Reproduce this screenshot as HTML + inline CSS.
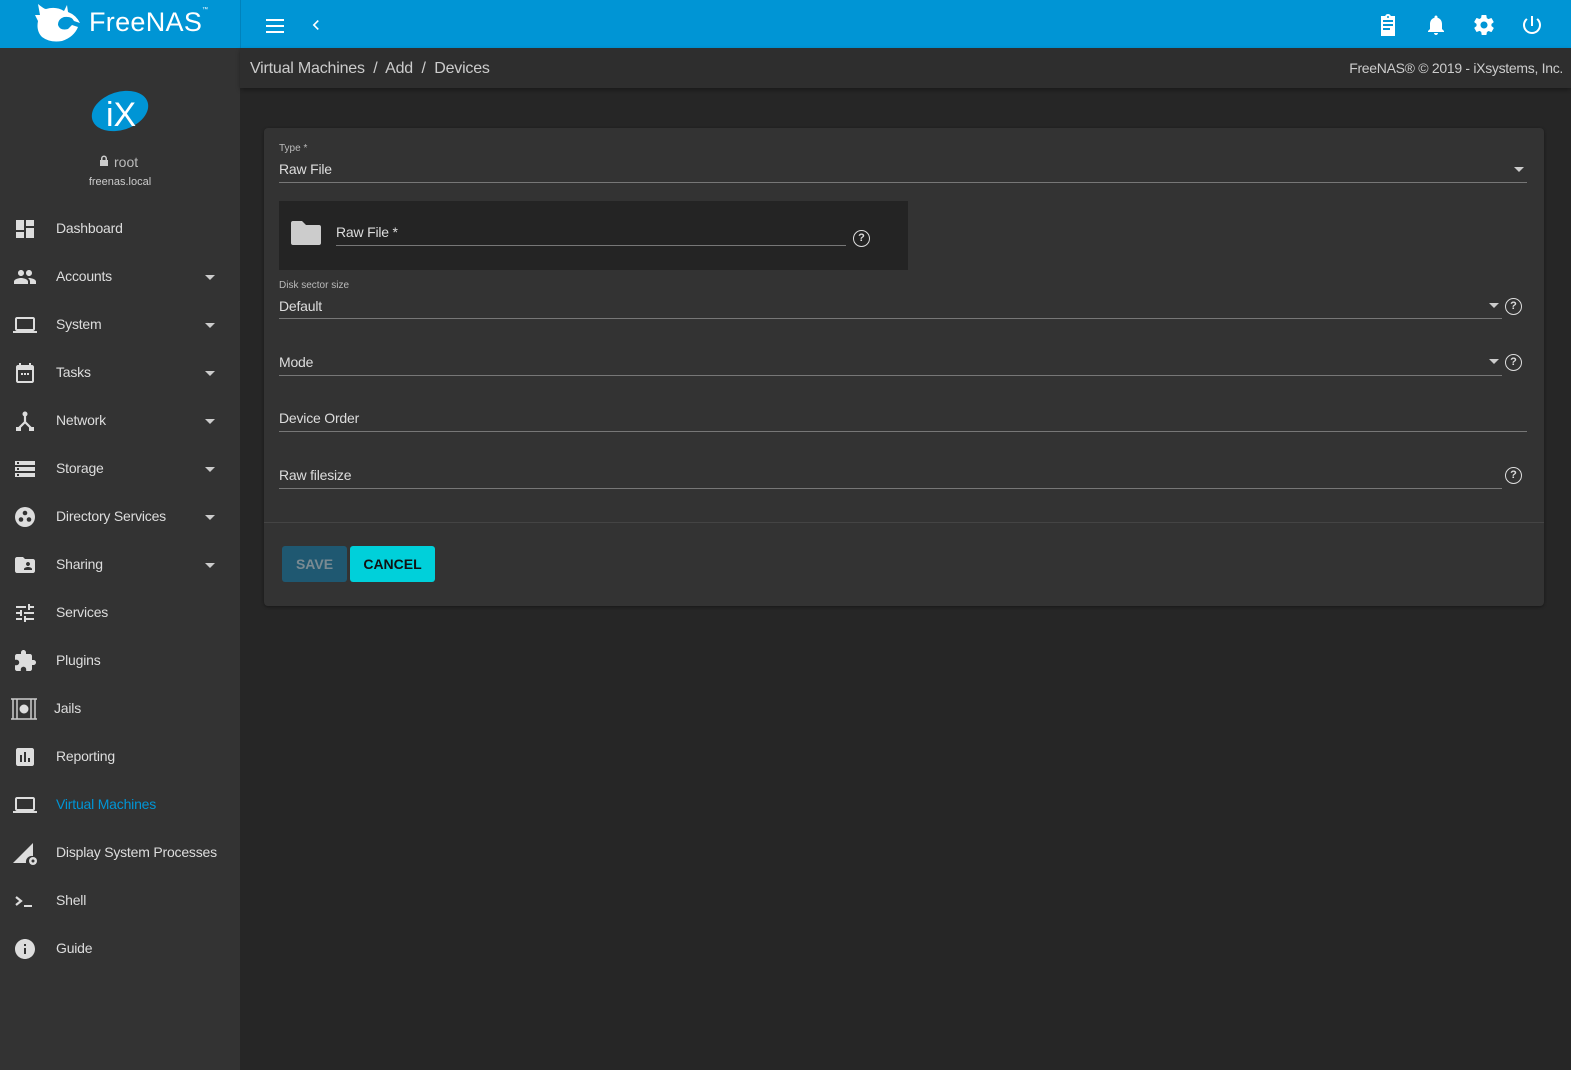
<!DOCTYPE html>
<html><head><meta charset="utf-8"><style>
*{box-sizing:border-box;margin:0;padding:0}
body{width:1571px;height:1070px;overflow:hidden;background:#262626;font-family:"Liberation Sans",sans-serif;color:#e0e0e0;position:relative}
.abs{position:absolute}
#top{left:0;top:0;width:1571px;height:48px;background:#0095d5}
#side{left:0;top:48px;width:240px;height:1022px;background:#333}
#crumb{left:240px;top:48px;width:1331px;height:40px;background:#2e2e2e;box-shadow:0 2px 4px rgba(0,0,0,.3)}
.nav{position:absolute;left:0;width:240px;height:48px;font-size:14px;color:#ddd;letter-spacing:-0.2px}
.nav span{position:absolute;left:56px;top:17px}
.nav svg{position:absolute;left:13px;top:14px}
.nav .car{position:absolute;left:205px;top:24px;border-left:5px solid transparent;border-right:5px solid transparent;border-top:5px solid #ccc}
#card{left:264px;top:128px;width:1280px;height:478px;background:#333;border-radius:4px;box-shadow:0 1px 3px rgba(0,0,0,.4)}
.lbl{position:absolute;font-size:10px;color:#bbb}
.val{position:absolute;font-size:14px;color:#ddd;letter-spacing:-0.2px}
.line{position:absolute;height:1px;background:#777}
.dd{position:absolute;border-left:5px solid transparent;border-right:5px solid transparent;border-top:5px solid #ccc}
.help{position:absolute;width:17px;height:17px;border:1.5px solid #ddd;border-radius:50%;font-size:11px;font-weight:bold;text-align:center;line-height:14px;color:#ddd}
</style></head><body>
<div id="top" class="abs">
 <svg class="abs" style="left:34px;top:3px" width="50" height="40" viewBox="0 0 50 40"><path fill="#fff" d="M4 1 Q10 6 12 6 Q22 3 30 8 L33 2 L34 9 Q42 12 46 20 L40 18 Q38 13 30 14 Q24 16 24 22 Q26 28 34 26 L38 22 L44 24 Q40 34 28 38 Q16 40 8 34 Q2 28 4 18 L1 12 L6 12 Z"/><circle cx="32" cy="20" r="3" fill="#0095d5"/></svg>
 <div class="abs" style="left:89px;top:7px;font-size:27px;color:#fff;letter-spacing:0.3px">FreeNAS<sup style="font-size:6px;vertical-align:top">™</sup></div>
 <div class="abs" style="left:240px;top:0;width:1px;height:48px;background:rgba(0,0,0,.12)"></div>
 <svg class="abs" style="left:264px;top:15px" width="22" height="20" viewBox="0 0 22 20"><path fill="#fff" d="M2 4h18v2H2zm0 6h18v2H2zm0 6h18v2H2z"/></svg>
 <svg class="abs" style="left:306px;top:15px" width="20" height="20" viewBox="0 0 24 24"><path fill="#fff" d="M15.4 7.4L14 6l-6 6 6 6 1.4-1.4L10.8 12z"/></svg>
 <svg class="abs" style="left:1376px;top:13px" width="24" height="24" viewBox="0 0 24 24"><path fill="#fff" d="M19 3h-4.2C14.4 1.8 13.3 1 12 1s-2.4.8-2.8 2H5v20h14V3zm-7 0c.6 0 1 .4 1 1s-.4 1-1 1-1-.4-1-1 .4-1 1-1zm2 14H7v-2h7v2zm3-4H7v-2h10v2zm0-4H7V7h10v2z"/></svg>
 <svg class="abs" style="left:1424px;top:13px" width="24" height="24" viewBox="0 0 24 24"><path fill="#fff" d="M12 22c1.1 0 2-.9 2-2h-4c0 1.1.9 2 2 2zm6-6v-5c0-3.1-1.6-5.6-4.5-6.3V4c0-.8-.7-1.5-1.5-1.5s-1.5.7-1.5 1.5v.7C7.6 5.4 6 7.9 6 11v5l-2 2v1h16v-1l-2-2z"/></svg>
 <svg class="abs" style="left:1472px;top:13px" width="24" height="24" viewBox="0 0 24 24"><path fill="#fff" d="M19.4 13c0-.3.1-.6.1-1s0-.7-.1-1l2.1-1.6c.2-.2.2-.4.1-.6l-2-3.5c-.1-.2-.4-.3-.6-.2l-2.5 1c-.5-.4-1.1-.7-1.7-1l-.4-2.6C14.4 2.2 14.2 2 14 2h-4c-.2 0-.5.2-.5.4l-.4 2.6c-.6.3-1.2.6-1.7 1l-2.5-1c-.2-.1-.5 0-.6.2l-2 3.5c-.1.2-.1.5.1.6L4.6 11c0 .3-.1.6-.1 1s0 .7.1 1l-2.1 1.6c-.2.2-.2.4-.1.6l2 3.5c.1.2.4.3.6.2l2.5-1c.5.4 1.1.7 1.700 1l.4 2.6c0 .3.2.5.4.5h4c.2 0 .5-.2.5-.4l.4-2.6c.6-.3 1.2-.6 1.7-1l2.5 1c.2.1.5 0 .6-.2l2-3.5c.1-.2.1-.5-.1-.6L19.4 13zM12 15.5c-1.9 0-3.5-1.6-3.5-3.5s1.6-3.5 3.5-3.5 3.5 1.6 3.5 3.5-1.6 3.5-3.5 3.5z"/></svg>
 <svg class="abs" style="left:1520px;top:13px" width="24" height="24" viewBox="0 0 24 24"><path fill="#fff" d="M13 3h-2v10h2V3zm4.8 2.2l-1.4 1.4C17.9 7.8 19 9.8 19 12c0 3.9-3.1 7-7 7s-7-3.1-7-7c0-2.2 1.1-4.2 2.6-5.4L6.2 5.2C4.2 6.9 3 9.3 3 12c0 5 4 9 9 9s9-4 9-9c0-2.7-1.2-5.1-3.2-6.8z"/></svg>
</div>
<div id="side" class="abs">
 <svg class="abs" style="left:90px;top:40px" width="60" height="46" viewBox="0 0 60 46"><ellipse cx="30" cy="23" rx="29" ry="19" transform="rotate(-18 30 23)" fill="#0095d5"/><text x="16" y="38" font-family="Liberation Sans Narrow, Liberation Sans" font-size="34" fill="#fff">iX</text></svg>
 <svg class="abs" style="left:99px;top:107px" width="10" height="12" viewBox="0 0 10 12"><path fill="#ccc" d="M2 5V3.5a3 3 0 016 0V5h1v6H1V5zm1.5 0h3V3.5a1.5 1.5 0 00-3 0z"/></svg>
 <div class="abs" style="left:114px;top:106px;font-size:14px;color:#bbb">root</div>
 <div class="abs" style="left:0;width:240px;text-align:center;top:128px;font-size:11px;color:#ccc">freenas.local</div>
</div>
<div class="nav" style="top:203px"><svg width="24" height="24" viewBox="0 0 24 24"><path fill="#ddd" d="M3 13h8V3H3v10zm0 8h8v-6H3v6zm10 0h8V11h-8v10zm0-18v6h8V3h-8z"/></svg><span>Dashboard</span></div>
<div class="nav" style="top:251px"><svg width="24" height="24" viewBox="0 0 24 24"><path fill="#ddd" d="M16 11c1.7 0 3-1.3 3-3s-1.3-3-3-3-3 1.3-3 3 1.3 3 3 3zm-8 0c1.7 0 3-1.3 3-3S9.7 5 8 5 5 6.3 5 8s1.3 3 3 3zm0 2c-2.3 0-7 1.2-7 3.5V19h14v-2.5c0-2.3-4.7-3.5-7-3.5zm8 0c-.3 0-.6 0-1 .1 1.2.8 2 2 2 3.4V19h6v-2.5c0-2.3-4.7-3.5-7-3.5z"/></svg><span>Accounts</span><i class="car"></i></div>
<div class="nav" style="top:299px"><svg width="24" height="24" viewBox="0 0 24 24"><path fill="#ddd" d="M20 18c1.1 0 2-.9 2-2V6c0-1.1-.9-2-2-2H4c-1.1 0-2 .9-2 2v10c0 1.1.9 2 2 2H0v2h24v-2h-4zM4 6h16v10H4V6z"/></svg><span>System</span><i class="car"></i></div>
<div class="nav" style="top:347px"><svg width="24" height="24" viewBox="0 0 24 24"><path fill="#ddd" d="M19 4h-1V2h-2v2H8V2H6v2H5c-1.1 0-2 .9-2 2v14c0 1.1.9 2 2 2h14c1.1 0 2-.9 2-2V6c0-1.1-.9-2-2-2zm0 16H5V9h14v11zM8 12h2v2H8zm3 0h2v2h-2zm3 0h2v2h-2z"/></svg><span>Tasks</span><i class="car"></i></div>
<div class="nav" style="top:395px"><svg width="24" height="24" viewBox="0 0 24 24"><circle cx="12" cy="5" r="2.5" fill="#ddd"/><path stroke="#ddd" stroke-width="2.2" fill="none" d="M12 7v6l-6 6M12 13l6 6"/><rect x="3" y="18" width="5" height="4" fill="#ddd"/><rect x="16" y="18" width="5" height="4" fill="#ddd"/></svg><span>Network</span><i class="car"></i></div>
<div class="nav" style="top:443px"><svg width="24" height="24" viewBox="0 0 24 24"><path fill="#ddd" d="M2 20h20v-4H2v4zm2-3h2v2H4v-2zM2 4v4h20V4H2zm4 3H4V5h2v2zm-4 7h20v-4H2v4zm2-3h2v2H4v-2z"/></svg><span>Storage</span><i class="car"></i></div>
<div class="nav" style="top:491px"><svg width="24" height="24" viewBox="0 0 24 24"><circle cx="12" cy="12" r="10" fill="#ddd"/><circle cx="12" cy="8" r="2.3" fill="#333"/><circle cx="8" cy="14.5" r="2.3" fill="#333"/><circle cx="16" cy="14.5" r="2.3" fill="#333"/></svg><span>Directory Services</span><i class="car"></i></div>
<div class="nav" style="top:539px"><svg width="24" height="24" viewBox="0 0 24 24"><path fill="#ddd" d="M20 6h-8l-2-2H4c-1.1 0-2 .9-2 2v12c0 1.1.9 2 2 2h16c1.1 0 2-.9 2-2V8c0-1.1-.9-2-2-2zm-5 3c1.1 0 2 .9 2 2s-.9 2-2 2-2-.9-2-2 .9-2 2-2zm4 8h-8v-1c0-1.3 2.7-2 4-2s4 .7 4 2v1z"/></svg><span>Sharing</span><i class="car"></i></div>
<div class="nav" style="top:587px"><svg width="24" height="24" viewBox="0 0 24 24"><path fill="#ddd" d="M3 17v2h6v-2H3zM3 5v2h10V5H3zm10 16v-2h8v-2h-8v-2h-2v6h2zM7 9v2H3v2h4v2h2V9H7zm14 4v-2H11v2h10zm-6-4h2V7h4V5h-4V3h-2v6z"/></svg><span>Services</span></div>
<div class="nav" style="top:635px"><svg width="24" height="24" viewBox="0 0 24 24"><path fill="#ddd" d="M20.5 11H19V7c0-1.1-.9-2-2-2h-4V3.5C13 2.1 11.9 1 10.5 1S8 2.1 8 3.5V5H4c-1.1 0-2 .9-2 2v3.8h1.5c1.5 0 2.7 1.2 2.7 2.7S5 16.2 3.5 16.2H2V20c0 1.1.9 2 2 2h3.8v-1.5c0-1.5 1.200-2.7 2.7-2.7s2.7 1.2 2.7 2.7V22H17c1.1 0 2-.9 2-2v-4h1.5c1.4 0 2.5-1.1 2.5-2.5S21.9 11 20.5 11z"/></svg><span>Plugins</span></div>
<div class="nav" style="top:683px"><svg style="left:10px" width="28" height="24" viewBox="0 0 28 24"><path fill="none" stroke="#ccc" stroke-width="1.5" d="M1 2h26M1 22h26M3 2v20M7 2v20M21 2v20M25 2v20"/><circle cx="14" cy="12" r="5" fill="#ddd" stroke="#333"/></svg><span style="left:54px">Jails</span></div>
<div class="nav" style="top:731px"><svg width="24" height="24" viewBox="0 0 24 24"><path fill="#ddd" d="M19 3H5c-1.1 0-2 .9-2 2v14c0 1.1.9 2 2 2h14c1.1 0 2-.9 2-2V5c0-1.1-.9-2-2-2zM9 17H7v-7h2v7zm4 0h-2V7h2v10zm4 0h-2v-4h2v4z"/></svg><span>Reporting</span></div>
<div class="nav" style="top:779px"><svg width="24" height="24" viewBox="0 0 24 24"><path fill="#ddd" d="M20 18c1.1 0 2-.9 2-2V6c0-1.1-.9-2-2-2H4c-1.1 0-2 .9-2 2v10c0 1.1.9 2 2 2H0v2h24v-2h-4zM4 6h16v10H4V6z"/></svg><span style="color:#0095d5">Virtual Machines</span></div>
<div class="nav" style="top:827px"><svg width="26" height="26" viewBox="0 0 26 26"><path fill="#ddd" d="M20 2L0 22h13a6 6 0 017-7z"/><circle cx="20" cy="20" r="4" fill="#ddd"/><circle cx="20" cy="20" r="1.5" fill="#333"/></svg><span>Display System Processes</span></div>
<div class="nav" style="top:875px"><svg width="24" height="24" viewBox="0 0 24 24"><path fill="none" stroke="#ddd" stroke-width="2.2" d="M3 8l5 4-5 4"/><path fill="#ddd" d="M11 16h8v2h-8z"/></svg><span>Shell</span></div>
<div class="nav" style="top:923px"><svg width="24" height="24" viewBox="0 0 24 24"><path fill="#ddd" d="M12 2C6.5 2 2 6.5 2 12s4.5 10 10 10 10-4.5 10-10S17.5 2 12 2zm1 15h-2v-6h2v6zm0-8h-2V7h2v2z"/></svg><span>Guide</span></div>
<div id="crumb" class="abs">
 <div class="abs" style="left:10px;top:12px;font-size:16px;color:#ccc;letter-spacing:-0.2px">Virtual Machines&nbsp; /&nbsp; Add&nbsp; /&nbsp; Devices</div>
 <div class="abs" style="right:8px;top:12px;font-size:14px;color:#ccc;letter-spacing:-0.3px">FreeNAS® © 2019 - iXsystems, Inc.</div>
</div>
<div id="card" class="abs">
 <div class="lbl" style="left:15px;top:15px">Type *</div>
 <div class="val" style="left:15px;top:33px">Raw File</div>
 <i class="dd" style="left:1250px;top:39px"></i>
 <div class="line" style="left:15px;top:54px;width:1248px"></div>
 <div class="abs" style="left:15px;top:73px;width:629px;height:69px;background:#242424">
  <svg class="abs" style="left:11px;top:18px" width="32" height="28" viewBox="0 0 32 28"><path fill="#ccc" d="M12 2H3C1.6 2 1 3 1 4v20c0 1 .6 2 2 2h26c1.4 0 2-1 2-2V8c0-1-.6-2-2-2H16z"/></svg>
  <div class="val" style="left:57px;top:23px">Raw File *</div>
  <div class="line" style="left:57px;top:44px;width:510px"></div>
  <div class="help" style="left:574px;top:29px">?</div>
 </div>
 <div class="lbl" style="left:15px;top:152px">Disk sector size</div>
 <div class="val" style="left:15px;top:170px">Default</div>
 <i class="dd" style="left:1225px;top:175px"></i>
 <div class="line" style="left:15px;top:190px;width:1223px"></div>
 <div class="help" style="left:1241px;top:170px">?</div>
 <div class="val" style="left:15px;top:226px">Mode</div>
 <i class="dd" style="left:1225px;top:231px"></i>
 <div class="line" style="left:15px;top:247px;width:1223px"></div>
 <div class="help" style="left:1241px;top:226px">?</div>
 <div class="val" style="left:15px;top:282px">Device Order</div>
 <div class="line" style="left:15px;top:303px;width:1248px"></div>
 <div class="val" style="left:15px;top:339px">Raw filesize</div>
 <div class="line" style="left:15px;top:360px;width:1223px"></div>
 <div class="help" style="left:1241px;top:339px">?</div>
 <div class="abs" style="left:0;top:394px;width:1280px;height:1px;background:#444"></div>
 <div class="abs" style="left:18px;top:418px;width:65px;height:36px;background:#1f5871;border-radius:3px;color:#7a8a92;font-size:14px;font-weight:bold;text-align:center;line-height:36px">SAVE</div>
 <div class="abs" style="left:86px;top:418px;width:85px;height:36px;background:#00d0da;border-radius:3px;color:#111;font-size:14px;font-weight:bold;text-align:center;line-height:36px">CANCEL</div>
</div>
</body></html>
